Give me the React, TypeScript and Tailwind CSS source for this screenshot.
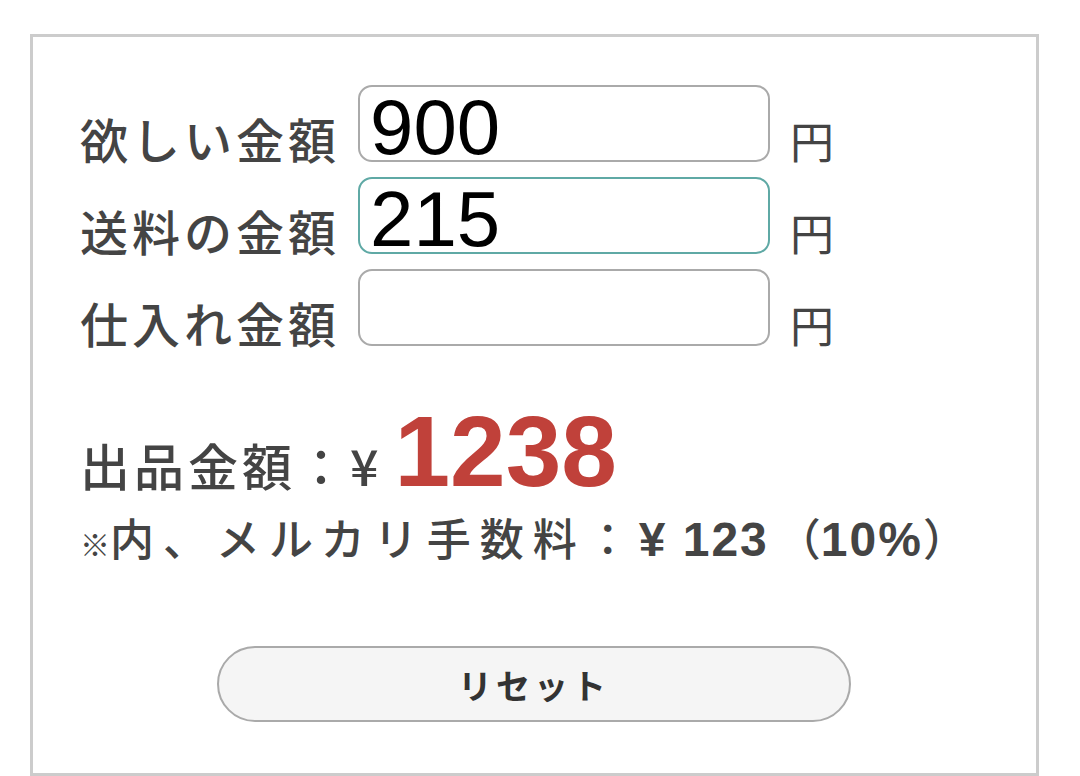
import React, { useState } from 'react';

const jp = { fontFamily: '"Noto Sans CJK JP", "Noto Sans", sans-serif' };
const num = { fontFamily: '"Liberation Sans", Arial, sans-serif' };

function PriceRow({ label, value, focused, onChange }: { label: string; value: string; focused?: boolean; onChange: (v: string) => void }) {
  return (
    <div className="flex items-end h-[77px]">
      <span className="w-[278px] text-[48px] leading-none font-medium text-[#444444] tracking-[4px]" style={jp}>
        {label}
      </span>
      <input
        value={value}
        onChange={e => onChange(e.target.value)}
        className={`w-[412px] h-[77px] rounded-[14px] border-2 bg-white pl-[10px] pt-[8px] text-[78px] leading-none text-black outline-none ${focused ? 'border-[#5fa9a5]' : 'border-[#aaaaaa]'}`}
        style={num}
      />
      <span className="ml-[20px] text-[44px] leading-none text-[#444444]" style={jp}>円</span>
    </div>
  );
}

export default function App() {
  const [want, setWant] = useState('900');
  const [ship, setShip] = useState('215');
  const [cost, setCost] = useState('');

  return (
    <div className="w-[1080px] h-[776px] bg-white overflow-hidden pl-[30px] pt-[34px]">
      <div className="w-[1009px] h-[742px] border-[3px] border-[#cccccc] pl-[47px] pt-[48px]">
        <div className="flex flex-col gap-[15px]">
          <PriceRow label="欲しい金額" value={want} onChange={setWant} />
          <PriceRow label="送料の金額" value={ship} focused onChange={setShip} />
          <PriceRow label="仕入れ金額" value={cost} onChange={setCost} />
        </div>

        <div className="mt-[55px] flex items-baseline leading-none text-[#444444] font-medium" style={jp}>
          <span className="text-[50px] tracking-[4px]">出品金額：¥</span>
          <span className="ml-[12px] text-[100px] leading-none font-bold text-[#c0413a]" style={num}>1238</span>
        </div>
        <div className="mt-[14px] flex items-baseline leading-none text-[#444444] text-[44px] font-medium tracking-[9px]" style={jp}>
          <span className="text-[30px] font-bold tracking-normal">※</span>
          <span>内、メルカリ手数料：</span>
          <span className="text-[48px] font-bold tracking-[2px]" style={num}>¥ 123</span>
          <span className="ml-[8px] tracking-normal">（</span>
          <span className="text-[48px] font-bold tracking-[2px]" style={num}>10%</span>
          <span className="tracking-normal">）</span>
        </div>

        <div className="mt-[82px] pl-[137px]">
          <button
            onClick={() => { setWant(''); setShip(''); setCost(''); }}
            className="w-[634px] h-[76px] rounded-full border-2 border-[#aaaaaa] bg-[#f5f5f5] text-[34px] font-bold text-[#333333] tracking-[4px]"
            style={jp}
          >
            リセット
          </button>
        </div>
      </div>
    </div>
  );
}
